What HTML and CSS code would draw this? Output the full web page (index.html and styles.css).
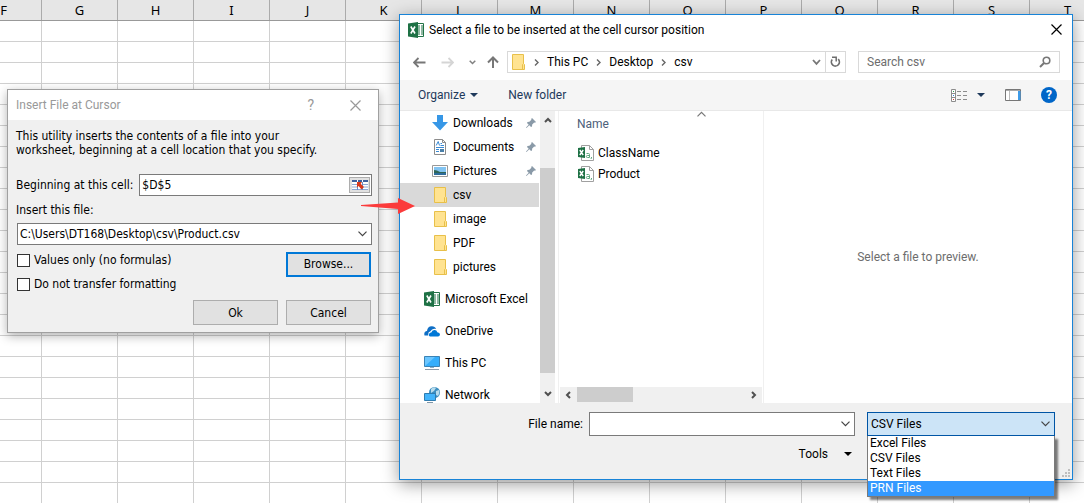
FILE: index.html
```
<!DOCTYPE html>
<html lang="en">
<head>
    <meta charset="UTF-8">
    <meta name="viewport" content="width=device-width, initial-scale=1.0">
    <title>Insert File at Cursor</title>
    <link rel="stylesheet" href="styles.css">
</head>
<body>
    <!-- Shared icons -->
    <svg class="sprite" aria-hidden="true">
        <symbol id="icon-chevron" viewBox="0 0 9 6">
            <path d="M0.5 0.7 4.5 4.7 8.5 0.7" fill="none" stroke="currentColor" stroke-width="1.2"/>
        </symbol>
        <symbol id="icon-scroll" viewBox="0 0 8 6">
            <path d="M1 1 4 4 7 1" fill="none" stroke="currentColor" stroke-width="2"/>
        </symbol>
        <symbol id="icon-close" viewBox="0 0 11 11">
            <path d="M0.5 0.5 10.5 10.5M10.5 0.5 0.5 10.5" fill="none" stroke="currentColor" stroke-width="1.2"/>
        </symbol>
        <symbol id="icon-triangle" viewBox="0 0 8 4">
            <path d="M0 0H8L4 4Z" fill="currentColor"/>
        </symbol>
        <symbol id="icon-folder" viewBox="0 0 16 16">
            <path d="M2.5 0.5H13.5V9.5L14.5 10.5V15.5H2.5Z" fill="#ffe391" stroke="#e8c04a"/>
            <path d="M12.5 15V10.5L13.5 9.5" fill="none" stroke="#e8c04a"/>
        </symbol>
        <symbol id="icon-excel" viewBox="0 0 16 16">
            <path d="M9 1.5H15.5V14.5H9Z" fill="#fff" stroke="#217346"/>
            <path d="M10 4H12M13 4H15M10 6H12M13 6H15M10 8H12M13 8H15M10 10H12M13 10H15M10 12H12M13 12H15" stroke="#217346"/>
            <path d="M0 1.5 10 0V16L0 14.5Z" fill="#1e7145"/>
            <path d="M2.8 4.5 7 11.5M7 4.5 2.8 11.5" stroke="#fff" stroke-width="1.6"/>
        </symbol>
        <symbol id="icon-csv" viewBox="0 0 16 16">
            <path d="M3.5 0.5H11.5L15.5 4.5V15.5H3.5Z" fill="#fff" stroke="#a0a0a0"/>
            <path d="M11.5 0.5V4.5H15.5" fill="none" stroke="#a0a0a0"/>
            <path d="M8.5 8.5H10.5Q11.5 8.5 11.5 9.5V12.5M11.5 10.5H9.5Q8.3 10.5 8.3 11.5T9.5 12.5H11.5M13.5 12V13L12.8 14" fill="none" stroke="#5fa87f"/>
            <path d="M0 3 7 2V13L0 12Z" fill="#1e7145"/>
            <path d="M1.8 5 5.2 10M5.2 5 1.8 10" stroke="#fff" stroke-width="1.4"/>
        </symbol>
        <symbol id="icon-pin" viewBox="0 0 10 10">
            <path d="M6 0 10 4 9 4.8 8.2 4.6 6.2 6.6 6 8.5 5 9 3.3 7.2 0.5 10 0 9.5 2.7 6.7 1 5 1.5 4 3.4 3.8 5.4 1.8 5.2 1Z" fill="#8a9aa8"/>
        </symbol>
    </svg>

    <main class="desktop">
        <div class="sheet">
            <div class="sheet-head">
                <span>F</span><span>G</span><span>H</span><span>I</span><span>J</span>
                <span>K</span><span>L</span><span>M</span><span>N</span><span>O</span>
                <span>P</span><span>Q</span><span>R</span><span>S</span><span>T</span>
            </div>
            <div class="sheet-grid"></div>
        </div>

        <form class="window insert-window">
            <header class="insert-title">
                <h1>Insert File at Cursor</h1>
                <button type="button" class="plain help" aria-label="Help">?</button>
                <button type="button" class="plain" aria-label="Close"><svg class="close"><use href="#icon-close"/></svg></button>
            </header>
            <div class="insert-body">
                <p>This utility inserts the contents of a file into your<br>worksheet, beginning at a cell location that you specify.</p>
                <div class="cell-row">
                    <label for="cell">Beginning at this cell:</label>
                    <div class="field cell-field">
                        <input id="cell" type="text" value="$D$5">
                        <button type="button" class="range-pick" aria-label="Select range">
                            <svg width="16" height="12" viewBox="0 0 16 12">
                                <path d="M0 1H16V11H0Z" fill="#fff"/>
                                <path d="M0 1H5V3H0ZM6 1H10V3H6ZM11 1H16V3H11Z" fill="#3d5f9e"/>
                                <path d="M0 5.5H5M11 5.5H16M0 8H5M11 8H16M0 10.5H16" stroke="#8ea9d6"/>
                                <path d="M5.5 3V11M10.5 3V11" stroke="#6b8cc4"/>
                                <path d="M5 3H10L8.7 4.8 12 8 9.5 10.5 6.6 7 5 8.5Z" fill="#d9391b"/>
                            </svg>
                        </button>
                    </div>
                </div>
                <label for="path">Insert this file:</label>
                <div class="field">
                    <input id="path" type="text" value="C:\Users\DT168\Desktop\csv\Product.csv">
                    <svg class="chevron"><use href="#icon-chevron"/></svg>
                </div>
                <div class="options">
                    <div>
                        <label class="check"><input type="checkbox">Values only (no formulas)</label>
                        <label class="check"><input type="checkbox">Do not transfer formatting</label>
                    </div>
                    <button type="button" class="push focused">Browse...</button>
                </div>
                <div class="actions">
                    <button type="button" class="push">Ok</button>
                    <button type="button" class="push">Cancel</button>
                </div>
            </div>
        </form>

        <form class="window picker-window">
            <header class="picker-title">
                <svg class="icon"><use href="#icon-excel"/></svg>
                <h2>Select a file to be inserted at the cell cursor position</h2>
                <button type="button" class="plain" aria-label="Close"><svg class="close"><use href="#icon-close"/></svg></button>
            </header>

            <nav class="address-row">
                <div class="history">
                    <button type="button" class="plain" aria-label="Back"><svg width="13" height="11" viewBox="0 0 13 11"><path d="M12.5 5.5H1M5.5 1 1 5.5 5.5 10" fill="none" stroke="#777" stroke-width="1.8"/></svg></button>
                    <button type="button" class="plain" aria-label="Forward"><svg width="13" height="11" viewBox="0 0 13 11"><path d="M0.5 5.5H12M7.5 1 12 5.5 7.5 10" fill="none" stroke="#d5d5d5" stroke-width="1.8"/></svg></button>
                    <button type="button" class="plain" aria-label="Recent"><svg width="7" height="5" viewBox="0 0 7 5"><path d="M0.7 0.7 3.5 3.5 6.3 0.7" fill="none" stroke="#808080" stroke-width="1.5"/></svg></button>
                    <button type="button" class="plain" aria-label="Up"><svg width="12" height="12" viewBox="0 0 12 12"><path d="M6 12V1.5M1 6.5 6 1.5 11 6.5" fill="none" stroke="#777" stroke-width="2"/></svg></button>
                </div>
                <div class="address">
                    <svg class="icon"><use href="#icon-folder"/></svg>
                    <svg class="crumb-arrow" viewBox="0 0 5 7"><path d="M1 0.5 4 3.5 1 6.5"/></svg>
                    <a href="#">This PC</a>
                    <svg class="crumb-arrow" viewBox="0 0 5 7"><path d="M1 0.5 4 3.5 1 6.5"/></svg>
                    <a href="#">Desktop</a>
                    <svg class="crumb-arrow" viewBox="0 0 5 7"><path d="M1 0.5 4 3.5 1 6.5"/></svg>
                    <a href="#">csv</a>
                    <button type="button" class="plain history-open" aria-label="Previous locations"><svg width="9" height="7" viewBox="0 0 9 7"><path d="M1 1 4.5 4.8 8 1" fill="none" stroke="#777" stroke-width="1.8"/></svg></button>
                    <button type="button" class="plain refresh" aria-label="Refresh"><svg width="11" height="12" viewBox="0 0 11 12"><path d="M2.2 3.6A4 4 0 1 0 8.2 3.2" fill="none" stroke="#6d6d6d" stroke-width="1.7"/><path d="M2 1.2H6.2V5.4" fill="none" stroke="#6d6d6d" stroke-width="1.5"/></svg></button>
                </div>
                <div class="search">
                    <input type="search" placeholder="Search csv" aria-label="Search csv">
                    <svg width="12" height="12" viewBox="0 0 12 12"><circle cx="7.5" cy="4.5" r="3.3" fill="none" stroke="#777" stroke-width="1.6"/><path d="M5 7 1 11" stroke="#777" stroke-width="2"/></svg>
                </div>
            </nav>

            <div class="toolbar">
                <button type="button" class="plain">Organize <svg class="triangle"><use href="#icon-triangle"/></svg></button>
                <button type="button" class="plain">New folder</button>
                <div class="view-tools">
                    <button type="button" class="plain" aria-label="Change view">
                        <svg width="17" height="13" viewBox="0 0 17 13">
                            <path d="M0.5 0.5H4.5V12.5H0.5ZM0.5 4.5H4.5M0.5 8.5H4.5" fill="#fff" stroke="#8c8c8c"/>
                            <path d="M2 2.5H3" stroke="#2f9e4f"/><path d="M2 6.5H3" stroke="#2f7fe0"/><path d="M2 10.5H3" stroke="#d33"/>
                            <path d="M6 2.5H10M12 2.5H16M6 6.5H10M12 6.5H16M6 10.5H10M12 10.5H16" stroke="#8c8c8c"/>
                        </svg>
                        <svg class="triangle"><use href="#icon-triangle"/></svg>
                    </button>
                    <button type="button" class="plain" aria-label="Preview pane">
                        <svg width="16" height="12" viewBox="0 0 16 12">
                            <path d="M0.5 0.5H15.5V11.5H0.5Z" fill="#fff" stroke="#777"/>
                            <path d="M1 1.5H15" stroke="#aaa"/><path d="M4.5 2V11" stroke="#bbb"/>
                            <path d="M13 2H15.5V11H13Z" fill="#3e9be8"/>
                        </svg>
                    </button>
                    <button type="button" class="plain help-round" aria-label="Get help">?</button>
                </div>
            </div>

            <div class="panes">
                <div class="nav-pane">
                    <ul class="places">
                        <li><svg class="icon"><path d="M5 0H11V7H16L8 15.5 0 7H5Z" fill="#3797e6"/></svg>Downloads<svg class="pin"><use href="#icon-pin"/></svg></li>
                        <li><svg class="icon"><path d="M2.5 0.5H10.5L13.5 3.5V15.5H2.5Z" fill="#fff" stroke="#8c8c8c"/><path d="M10.5 0.5V3.5H13.5" fill="none" stroke="#8c8c8c"/><path d="M4.2 6.5 6.2 2.5 7.5 6.5M8.5 4.5H10M8.5 6.5H12M4 8.5H12M4 10.5H7M4 12.5H7" fill="none" stroke="#3a8ad4"/><path d="M8 10H12V13H8Z" fill="#4a7fa8"/></svg>Documents<svg class="pin"><use href="#icon-pin"/></svg></li>
                        <li><svg class="icon"><path d="M0.5 2.5H15.5V13.5H0.5Z" fill="#fff" stroke="#999"/><path d="M2 4H14V12H2Z" fill="#82c4f2"/><path d="M2 7Q5 7 8 9H14V10H2Z" fill="#2f6658"/><path d="M2 10H14V12H2Z" fill="#2d6c9c"/></svg>Pictures<svg class="pin"><use href="#icon-pin"/></svg></li>
                        <li class="selected"><svg class="icon"><use href="#icon-folder"/></svg>csv</li>
                        <li><svg class="icon"><use href="#icon-folder"/></svg>image</li>
                        <li><svg class="icon"><use href="#icon-folder"/></svg>PDF</li>
                        <li><svg class="icon"><use href="#icon-folder"/></svg>pictures</li>
                    </ul>
                    <ul class="roots">
                        <li><svg class="icon"><use href="#icon-excel"/></svg>Microsoft Excel</li>
                        <li><svg class="icon"><path d="M0.5 12.5Q-0.5 8.5 3 8Q3.5 3 8 3.2Q11 3.2 12 6Q8 5 6.5 8.3Q3.8 8.8 4.2 12.5Z" fill="#0f6fc6"/><path d="M6 13.5Q4 12.5 5.3 10.5Q6.2 9.5 7.3 9.6Q8 6.8 10.5 7Q12.8 7 13.3 9.2Q16 9.5 16 11.6Q15.8 13.5 14 13.5Z" fill="#0078d7"/></svg>OneDrive</li>
                        <li><svg class="icon"><path d="M0.5 1.5H15.5V11.5H0.5Z" fill="#35aefc" stroke="#3b83b5"/><path d="M1 11V2H11Z" fill="#6bc6ff"/><path d="M6 12H10V13H6Z" fill="#8bb0c8"/><path d="M1 14.5H15" stroke="#8d9baa"/></svg>This PC</li>
                        <li><svg class="icon"><circle cx="10.5" cy="5.5" r="5.5" fill="#3c8ec0"/><path d="M7 2Q10-1 12 1L10 4 7 6ZM12 4 15 3Q16 6 14 9L12 8Z" fill="#b9dcec"/><path d="M0.5 6.5H11.5V13.5H0.5Z" fill="#42b4fb" stroke="#2f7cb0"/><path d="M3 15.5H9" stroke="#7e96a8"/></svg>Network</li>
                    </ul>
                    <div class="scroll-y">
                        <svg class="scroll-arrow up"><use href="#icon-scroll"/></svg>
                        <div class="thumb-y"></div>
                        <svg class="scroll-arrow"><use href="#icon-scroll"/></svg>
                    </div>
                </div>

                <div class="file-pane">
                    <svg class="sort-mark"><use href="#icon-chevron"/></svg>
                    <table class="files">
                        <thead><tr><th>Name</th></tr></thead>
                        <tbody>
                            <tr><td><svg class="icon"><use href="#icon-csv"/></svg>ClassName</td></tr>
                            <tr><td><svg class="icon"><use href="#icon-csv"/></svg>Product</td></tr>
                        </tbody>
                    </table>
                    <div class="scroll-x">
                        <svg class="scroll-arrow left"><use href="#icon-scroll"/></svg>
                        <div class="thumb-x"></div>
                        <svg class="scroll-arrow right"><use href="#icon-scroll"/></svg>
                    </div>
                </div>

                <div class="preview-pane">Select a file to preview.</div>
            </div>

            <footer class="picker-footer">
                <label for="filename">File name:</label>
                <div class="field name-field">
                    <input id="filename" type="text">
                    <svg class="chevron"><use href="#icon-chevron"/></svg>
                </div>
                <div class="type-field">
                    <select aria-label="File type">
                        <option>Excel Files</option>
                        <option selected>CSV Files</option>
                        <option>Text Files</option>
                        <option>PRN Files</option>
                    </select>
                    <svg class="chevron"><use href="#icon-chevron"/></svg>
                    <ul class="type-menu">
                        <li>Excel Files</li>
                        <li>CSV Files</li>
                        <li>Text Files</li>
                        <li class="active">PRN Files</li>
                    </ul>
                </div>
                <button type="button" class="plain tools">Tools <svg class="triangle"><use href="#icon-triangle"/></svg></button>
                <svg class="grip" viewBox="0 0 8 8"><path d="M6 0H8V2H6ZM3 3H5V5H3ZM6 3H8V5H6ZM0 6H2V8H0ZM3 6H5V8H3ZM6 6H8V8H6Z" fill="#bfbfbf"/></svg>
            </footer>
        </form>

        <svg class="pointer" viewBox="0 0 54 18"><path d="M0 8 37 5.5V1L54 9 37 17V12L0 9Z" fill="#fb3b3b"/></svg>
    </main>
</body>
</html>
```
FILE: styles.css
```
* {
    margin: 0;
    padding: 0;
    box-sizing: border-box;
}

body {
    font-family: Roboto, "Liberation Sans", sans-serif;
    font-size: 12px;
    color: #000;
    background-color: #fff;
}

button, input, select {
    font: inherit;
    color: inherit;
}

ul {
    list-style: none;
}

svg {
    display: block;
    flex: none;
}

.sprite {
    position: absolute;
    width: 0;
    height: 0;
}

.desktop {
    position: relative;
    min-height: 100vh;
    display: flex;
    overflow: hidden;
}

/* Spreadsheet */
.sheet {
    flex: 1;
    min-width: 0;
    display: flex;
    flex-direction: column;
    overflow: hidden;
}

.sheet-head {
    display: flex;
    height: 21px;
    margin-left: -34px;
    background-color: #e6e6e6;
    border-bottom: 1px solid #999;
    font-family: "Noto Sans", sans-serif;
    font-size: 13px;
    line-height: 20px;
    text-align: center;
}

.sheet-head span {
    flex: 0 0 76px;
    border-right: 1px solid #ababab;
}

.sheet-grid {
    flex: 1;
    background-image:
        linear-gradient(to left, #d0d0d0 1px, transparent 1px),
        linear-gradient(to top, #d0d0d0 1px, transparent 1px);
    background-size: 76px 21px;
    background-position: -34px 0;
}

/* Windows */
.window {
    position: absolute;
    display: flex;
    flex-direction: column;
}

.plain {
    display: flex;
    align-items: center;
    border: none;
    background: none;
}

.icon {
    width: 16px;
    height: 16px;
}

.close {
    width: 11px;
    height: 11px;
}

.chevron {
    width: 9px;
    height: 6px;
    color: #444;
}

.triangle {
    width: 8px;
    height: 4px;
}

.field {
    display: flex;
    align-items: center;
    height: 22px;
    border: 1px solid #7a7a7a;
    background-color: #fff;
}

.field input {
    flex: 1;
    min-width: 0;
    height: 20px;
    padding: 0 2px;
    border: none;
    outline: none;
    background: none;
}

.field .chevron {
    margin-right: 4px;
}

/* Insert dialog */
.insert-window {
    left: 7px;
    top: 89px;
    width: 372px;
    border: 1px solid #a0a0a0;
    background-color: #f0f0f0;
    box-shadow: 0 3px 10px rgba(0, 0, 0, 0.3);
}

.insert-title {
    display: flex;
    align-items: center;
    height: 30px;
    padding: 0 17px 0 8px;
    background-color: #fff;
    color: #999;
}

.insert-title h1 {
    flex: 1;
    font-size: 12px;
    font-weight: normal;
}

.insert-title .help {
    margin-right: 36px;
    font-size: 14px;
}

.insert-body {
    display: flex;
    flex-direction: column;
    padding: 9px 6px 7px 8px;
    font-family: "DejaVu Sans Condensed", "DejaVu Sans", sans-serif;
    line-height: 14px;
}

.cell-row {
    display: flex;
    align-items: center;
    gap: 6px;
    margin: 17px 0 7px;
}

.cell-field {
    flex: 1;
    padding-right: 1px;
}

.insert-body > .field {
    margin: 6px 0 3px 1px;
}

.range-pick {
    display: flex;
    align-items: center;
    justify-content: center;
    width: 21px;
    height: 16px;
    border: 1px solid #adadad;
    background-color: #e1e1e1;
}

.options {
    display: flex;
    align-items: center;
    justify-content: space-between;
    padding: 0 1px;
}

.check {
    display: flex;
    align-items: center;
    gap: 4px;
    height: 24px;
}

.check input {
    appearance: none;
    width: 13px;
    height: 13px;
    border: 1px solid #333;
    background-color: #fff;
}

.push {
    width: 85px;
    height: 25px;
    border: 1px solid #adadad;
    background-color: #e1e1e1;
}

.options .push {
    margin-bottom: 16px;
}

.push.focused {
    border: 2px solid #0078d7;
}

.actions {
    display: flex;
    justify-content: flex-end;
    gap: 8px;
    margin-top: 4px;
    padding-right: 1px;
}

/* File picker */
.picker-window {
    left: 399px;
    right: 11px;
    top: 14px;
    border: 1px solid #1883d7;
    background-color: #fff;
    box-shadow: 0 4px 16px rgba(0, 0, 0, 0.4);
}

.picker-title {
    display: flex;
    align-items: center;
    gap: 5px;
    height: 29px;
    padding: 0 10px 0 8px;
}

.picker-title h2 {
    flex: 1;
    font-size: 12px;
    font-weight: normal;
}

.address-row {
    display: flex;
    gap: 12px;
    padding: 7px 12px 7px 13px;
}

.history {
    display: flex;
    align-items: center;
    gap: 15px;
    margin-right: -4px;
}

.history button:nth-child(4) {
    margin-left: -4px;
}

.address {
    flex: 1;
    display: flex;
    align-items: center;
    gap: 8px;
    height: 22px;
    padding-left: 2px;
    border: 1px solid #d9d9d9;
}

.address a {
    color: #000;
    text-decoration: none;
}

.crumb-arrow {
    width: 5px;
    height: 7px;
    fill: none;
    stroke: #666;
    stroke-width: 1.4;
}

.history-open {
    margin-left: auto;
    margin-right: -4px;
}

.refresh {
    justify-content: center;
    width: 20px;
    height: 20px;
    border-left: 1px solid #d9d9d9;
}

.search {
    display: flex;
    align-items: center;
    width: 202px;
    padding: 0 8px;
    border: 1px solid #d9d9d9;
}

.search input {
    flex: 1;
    min-width: 0;
    border: none;
    outline: none;
    background: none;
}

.search input::placeholder {
    color: #6d6d6d;
}

.toolbar {
    display: flex;
    align-items: center;
    gap: 30px;
    height: 31px;
    padding: 0 15px 0 18px;
    border-bottom: 1px solid #e8e8e8;
    background-color: #f5f5f5;
    color: #1e395b;
}

.toolbar .plain {
    gap: 5px;
}

.view-tools {
    display: flex;
    align-items: center;
    gap: 20px;
    margin-left: auto;
}

.view-tools .plain:first-child {
    gap: 9px;
}

.view-tools .help-round {
    justify-content: center;
    width: 16px;
    height: 16px;
    border-radius: 50%;
    background-color: #0066c8;
    color: #fff;
    font-weight: bold;
}

.panes {
    display: flex;
    height: 292px;
}

.nav-pane {
    flex: 0 0 159px;
    display: grid;
    grid-template-columns: 1fr 15px;
    grid-template-rows: auto 1fr;
    border-right: 1px solid #f0f0f0;
    padding-right: 3px;
    overflow: hidden;
}

.places li {
    display: flex;
    align-items: center;
    gap: 5px;
    height: 24px;
    margin-right: 1px;
    padding: 0 3px 0 32px;
}

.places .selected {
    background-color: #d9d9d9;
}

.roots {
    grid-row: 2;
    min-height: 0;
    padding-top: 4px;
}

.roots li {
    display: flex;
    align-items: center;
    gap: 5px;
    height: 32px;
    padding-left: 24px;
}

.pin {
    width: 10px;
    height: 10px;
    margin-left: auto;
}

.scroll-y {
    grid-column: 2;
    grid-row: 1 / 3;
    display: flex;
    flex-direction: column;
    align-items: center;
    justify-content: space-between;
    padding: 6px 0;
    background-color: #f0f0f0;
}

.thumb-y {
    width: 15px;
    height: 205px;
    margin-top: 26px;
    background-color: #cdcdcd;
}

.scroll-arrow {
    width: 8px;
    height: 6px;
    color: #505050;
}

.scroll-arrow.up {
    transform: rotate(180deg);
}

.scroll-arrow.left {
    transform: rotate(90deg);
}

.scroll-arrow.right {
    margin-left: auto;
    transform: rotate(-90deg);
}

.file-pane {
    flex: 0 0 205px;
    display: flex;
    flex-direction: column;
    border-right: 1px solid #f0f0f0;
}

.sort-mark {
    align-self: flex-end;
    width: 9px;
    height: 6px;
    margin-right: 57px;
    color: #777;
    transform: rotate(180deg);
}

.files {
    border-collapse: collapse;
    margin-left: 18px;
}

.files th {
    height: 25px;
    padding-bottom: 11px;
    color: #4c607a;
    font-weight: normal;
    text-align: left;
}

.files td {
    display: flex;
    align-items: center;
    gap: 4px;
    height: 21px;
    padding-left: 1px;
}

.scroll-x {
    display: flex;
    align-items: center;
    gap: 5px;
    height: 16px;
    margin: auto 1px 0 1px;
    padding: 0 4px;
    background-color: #f0f0f0;
}

.thumb-x {
    width: 56px;
    height: 15px;
    margin-bottom: 1px;
    background-color: #cdcdcd;
}

.preview-pane {
    flex: 1;
    display: flex;
    align-items: center;
    justify-content: center;
    color: #6d6d6d;
}

.picker-footer {
    position: relative;
    display: grid;
    grid-template-columns: 183px 1fr 188px;
    align-items: center;
    column-gap: 6px;
    row-gap: 6px;
    padding: 9px 17px 13px 0;
    background-color: #f0f0f0;
}

.picker-footer label {
    text-align: right;
}

.name-field {
    height: 24px;
    margin-right: 6px;
}

.type-field {
    position: relative;
    display: flex;
    align-items: center;
}

.type-field select {
    appearance: none;
    width: 100%;
    height: 24px;
    padding: 0 3px;
    border: 1px solid #0055a5;
    border-radius: 0;
    background-color: #cce4f7;
    outline: none;
}

.type-field .chevron {
    position: absolute;
    right: 5px;
    pointer-events: none;
}

.type-menu {
    position: absolute;
    top: 100%;
    left: 0;
    width: 100%;
    border: 1px solid #7a7a7a;
    border-top: none;
    background-color: #fff;
    box-shadow: 3px 3px 2px rgba(0, 0, 0, 0.5);
    line-height: 15px;
}

.type-menu li {
    padding-left: 2px;
}

.type-menu .active {
    background-color: #3399ff;
    color: #fff;
}

.tools {
    grid-column: 2;
    justify-self: end;
    gap: 16px;
    height: 24px;
    margin-right: 9px;
}

.grip {
    position: absolute;
    right: 2px;
    bottom: 2px;
    width: 8px;
    height: 8px;
}

/* Arrow between the two windows */
.pointer {
    position: absolute;
    left: 361px;
    top: 197px;
    width: 54px;
    height: 18px;
}
```
